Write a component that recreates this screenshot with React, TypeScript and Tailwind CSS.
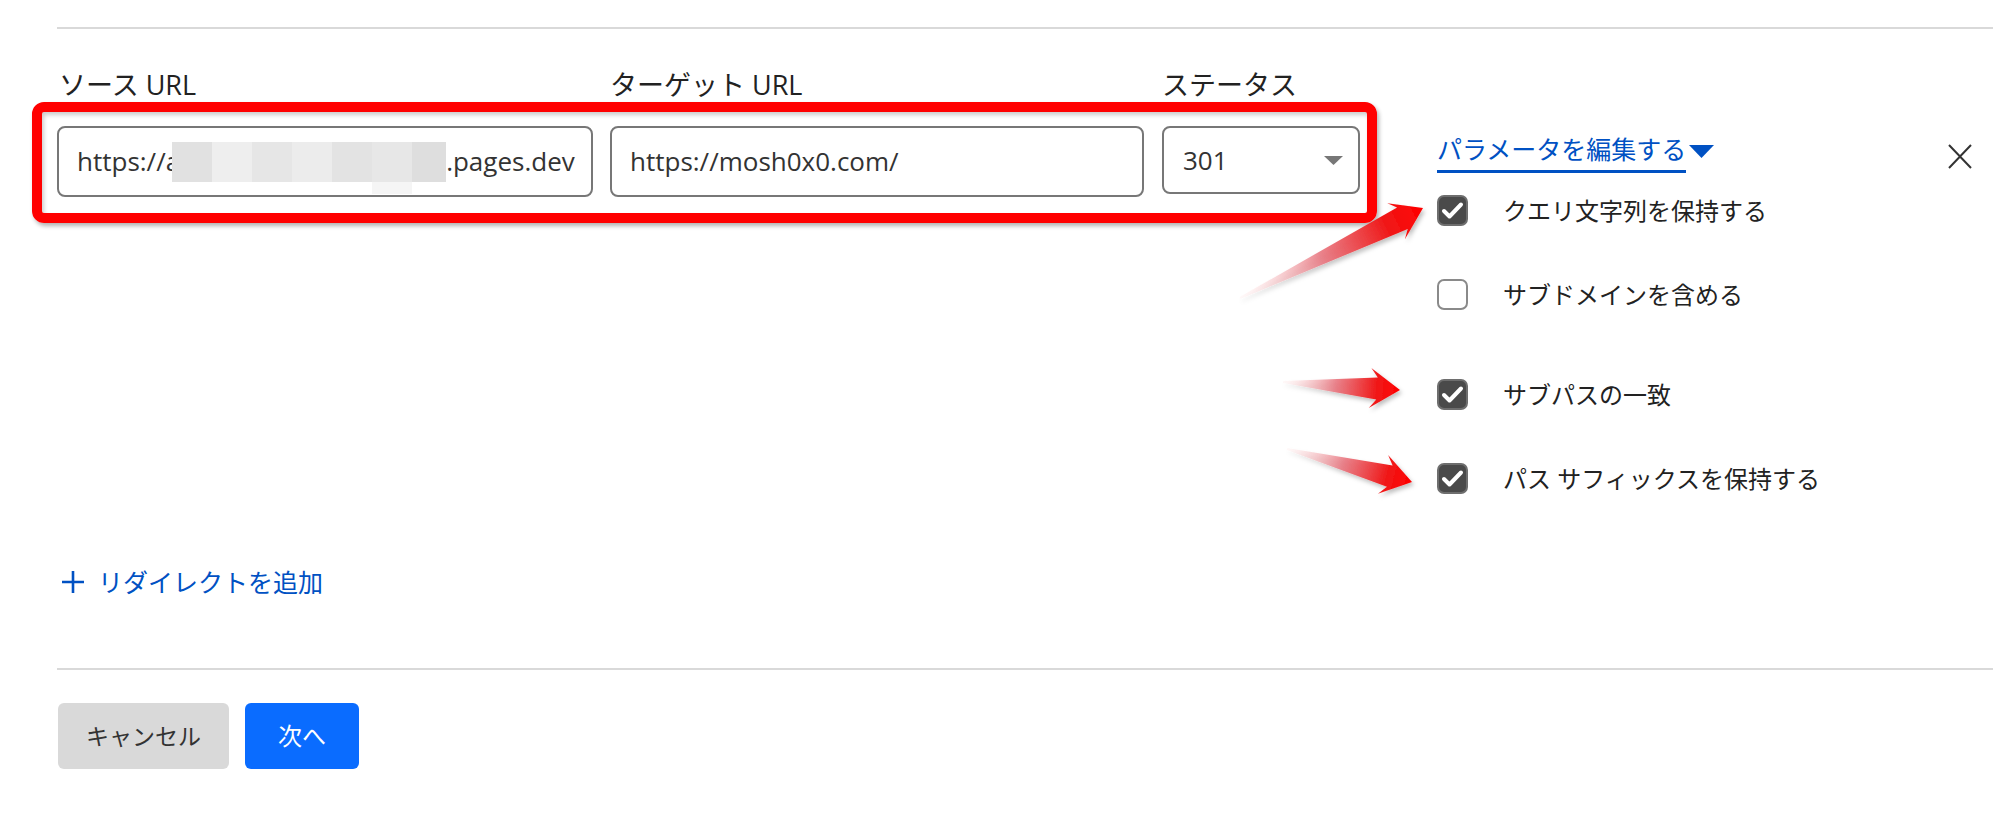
import React from 'react';

type Pt = [number, number];

// polygon for one annotation arrow, from a thin tail to a tip
function arrowPoints(t: Pt, p: Pt, headLen = 25, headW = 40, shaftW = 22) {
  const dx = p[0] - t[0];
  const dy = p[1] - t[1];
  const len = Math.hypot(dx, dy);
  const ux = dx / len;
  const uy = dy / len;
  const nx = -uy;
  const ny = ux;
  const bx = p[0] - ux * headLen;
  const by = p[1] - uy * headLen;
  const f = (x: number, y: number) => `${x.toFixed(1)},${y.toFixed(1)}`;
  return [
    f(t[0] + nx * 1, t[1] + ny * 1),
    f(bx + ux * 3 + nx * shaftW / 2, by + uy * 3 + ny * shaftW / 2),
    f(bx - ux * 4 + nx * headW / 2, by - uy * 4 + ny * headW / 2),
    f(p[0], p[1]),
    f(bx - ux * 4 - nx * headW / 2, by - uy * 4 - ny * headW / 2),
    f(bx + ux * 3 - nx * shaftW / 2, by + uy * 3 - ny * shaftW / 2),
    f(t[0] - nx * 1, t[1] - ny * 1),
  ].join(' ');
}

const arrows: { id: string; t: Pt; p: Pt; w: number }[] = [
  { id: 'a1', t: [1240, 298], p: [1423, 208], w: 24 },
  { id: 'a2', t: [1283, 382], p: [1400, 390], w: 22 },
  { id: 'a3', t: [1287, 449], p: [1412, 482], w: 22 },
];

function Arrows() {
  return (
    <svg className="absolute inset-0 pointer-events-none" width={2000} height={819}>
      <defs>
        <filter id="shadow" x="-20%" y="-20%" width="140%" height="140%">
          <feDropShadow dx="2" dy="3" stdDeviation="2" floodColor="#000" floodOpacity="0.25" />
        </filter>
        {arrows.map((a) => (
          <linearGradient key={a.id} id={a.id} gradientUnits="userSpaceOnUse" x1={a.t[0]} y1={a.t[1]} x2={a.p[0]} y2={a.p[1]}>
            <stop offset="0" stopColor="#ffe4e4" stopOpacity="0.2" />
            <stop offset="0.45" stopColor="#e8707a" stopOpacity="0.85" />
            <stop offset="0.8" stopColor="#f01818" />
            <stop offset="1" stopColor="#ff0000" />
          </linearGradient>
        ))}
      </defs>
      {arrows.map((a) => (
        <polygon key={a.id} points={arrowPoints(a.t, a.p, 26, 40, a.w)} fill={`url(#${a.id})`} filter="url(#shadow)" />
      ))}
    </svg>
  );
}

function Mosaic() {
  const cols = ['#e1e1e1', '#eeeeee', '#e6e6e6', '#ececec', '#e3e3e3', '#e7e7e7', '#dedede'];
  return (
    <div className="relative -ml-[8px] flex h-[40px] w-[274px] shrink-0">
      {cols.map((c, i) => (
        <div key={i} className={i === 6 ? 'h-full w-[34px]' : 'h-full w-[40px]'} style={{ backgroundColor: c }} />
      ))}
      <div className="absolute left-[200px] top-[40px] h-[12px] w-[40px] bg-[#f5f5f5]" />
    </div>
  );
}

function Checkbox({ checked }: { checked: boolean }) {
  if (!checked) {
    return <div className="h-[31px] w-[31px] shrink-0 rounded-[7px] border-2 border-[#8a8a8a] bg-white" />;
  }
  return (
    <div className="flex h-[31px] w-[31px] shrink-0 items-center justify-center rounded-[7px] border-2 border-[#6e6e6e] bg-[#4a4a4a]">
      <svg width="23" height="19" viewBox="0 0 23 19">
        <path d="M3 10 L8.5 15.5 L20 3.5" fill="none" stroke="#fff" strokeWidth="4" strokeLinecap="round" strokeLinejoin="round" />
      </svg>
    </div>
  );
}

function Option({ checked, label, className }: { checked: boolean; label: string; className: string }) {
  return (
    <div className={`flex items-center ${className}`}>
      <Checkbox checked={checked} />
      <span className="ml-[35px] text-[24px] leading-[31px] text-[#222]">{label}</span>
    </div>
  );
}

export default function App() {
  return (
    <div className="relative h-[819px] w-[2000px] overflow-hidden bg-white font-['Open_Sans','Noto_Sans_CJK_JP',sans-serif] text-[#222]">
      <div className="pl-[57px] pr-[7px] pt-[27px]">
        <div className="h-[2px] bg-[#d9d9d9]" />

        <div className="mt-[38px] flex">
          {/* redirect row */}
          <div className="flex w-[1303px] flex-col">
            <div className="flex text-[27px] leading-[36px]">
              <div className="w-[536px] pl-[2px]">ソース URL</div>
              <div className="ml-[17px] w-[534px]">ターゲット URL</div>
              <div className="ml-[18px] w-[198px]">ステータス</div>
            </div>

            <div className="relative mt-[23px] flex items-start text-[26px]">
              <div className="flex h-[71px] w-[536px] items-center overflow-hidden rounded-[8px] border-2 border-[#777] px-[18px] text-[#333]">
                <span>https://a</span>
                <Mosaic />
                <span>.pages.dev</span>
              </div>
              <div className="ml-[17px] flex h-[71px] w-[534px] items-center rounded-[8px] border-2 border-[#777] px-[18px] text-[#333]">
                https://mosh0x0.com/
              </div>
              <div className="ml-[18px] flex h-[68px] w-[198px] items-center justify-between rounded-[8px] border-2 border-[#777] pl-[19px] pr-[15px] text-[#333]">
                <span>301</span>
                <svg width="19" height="9" viewBox="0 0 19 9">
                  <path d="M0 0 H19 L9.5 9 Z" fill="#777" />
                </svg>
              </div>
              {/* annotation box */}
              <div className="pointer-events-none absolute -bottom-[26px] -left-[25px] -right-[17px] -top-[24px] rounded-[12px] border-[10px] border-[#ff0000] shadow-[2px_3px_4px_rgba(0,0,0,0.3),inset_2px_3px_4px_rgba(0,0,0,0.2)]" />
            </div>

            <div className="mt-[367px] flex items-center text-[25px] leading-[36px] text-[#0051c3]">
              <svg className="ml-[4px]" width="24" height="24" viewBox="0 0 24 24">
                <path d="M12 1 V23 M1 12 H23" stroke="#0051c3" strokeWidth="2.6" fill="none" />
              </svg>
              <span className="ml-[13px]">リダイレクトを追加</span>
            </div>
          </div>

          {/* parameters */}
          <div className="ml-[77px] flex flex-1 flex-col">
            <div className="mt-[70px] flex items-start justify-between">
              <div className="flex items-start">
                <span className="border-b-[3px] border-[#0051c3] pb-[8px] text-[25px] leading-[25px] text-[#0051c3]">パラメータを編集する</span>
                <svg className="ml-[3px] mt-[8px]" width="25" height="13" viewBox="0 0 25 13">
                  <path d="M0 0 H25 L12.5 13 Z" fill="#0051c3" />
                </svg>
              </div>
              <svg className="mr-[21px] mt-[7px]" width="24" height="25" viewBox="0 0 24 25">
                <path d="M1 1 L23 24 M23 1 L1 24" stroke="#333" strokeWidth="2" fill="none" />
              </svg>
            </div>
            <Option checked label="クエリ文字列を保持する" className="mt-[22px]" />
            <Option checked={false} label="サブドメインを含める" className="mt-[53px]" />
            <Option checked label="サブパスの一致" className="mt-[69px]" />
            <Option checked label="パス サフィックスを保持する" className="mt-[53px]" />
          </div>
        </div>

        <div className="mt-[68px] h-[2px] bg-[#d9d9d9]" />

        <div className="mt-[33px] flex gap-[16px] pl-[1px]">
          <button className="h-[66px] w-[171px] rounded-[6px] bg-[#d9d9d9] text-[23px] text-[#333]">キャンセル</button>
          <button className="h-[66px] w-[114px] rounded-[6px] bg-[#0a6cff] text-[24px] text-white">次へ</button>
        </div>
      </div>

      <Arrows />
    </div>
  );
}
